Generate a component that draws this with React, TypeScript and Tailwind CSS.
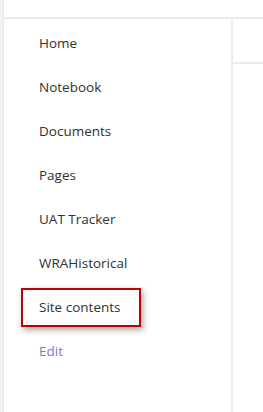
import React from "react";

const items = ["Home", "Notebook", "Documents", "Pages", "UAT Tracker", "WRAHistorical", "Site contents"];

export default function App() {
  return (
    <div
      className="flex w-[263px] h-[412px] bg-white overflow-hidden"
      style={{ fontFamily: '"Segoe UI", "Open Sans", "Noto Sans", sans-serif' }}
    >
      <div className="w-[4px] shrink-0 bg-[#f3f2f1] border-r border-[#e8e6e4]" />
      <div className="flex-1 flex flex-col">
        <div className="h-[19px] border-b-2 border-[#edebe9]" />
        <div className="flex flex-1">
          <nav className="relative w-[229px] shrink-0 border-r-2 border-[#edebe9] flex flex-col pt-[2px]">
            {items.map((t) => (
              <div key={t} className="h-[44px] flex items-center pl-[35px] text-[13.5px] text-[#323130]">
                {t}
              </div>
            ))}
            <div className="h-[44px] flex items-center pl-[35px] text-[13.5px] text-[#8a6fe0]">Edit</div>
            <div className="absolute left-[17px] top-[269px] w-[120px] h-[39px] border-2 border-[#c00000] shadow-[2px_3px_6px_rgba(0,0,0,0.35)]" />
          </nav>
          <div className="flex-1 flex flex-col">
            <div className="h-[45px] border-b-2 border-[#edebe9]" />
          </div>
        </div>
      </div>
    </div>
  );
}
